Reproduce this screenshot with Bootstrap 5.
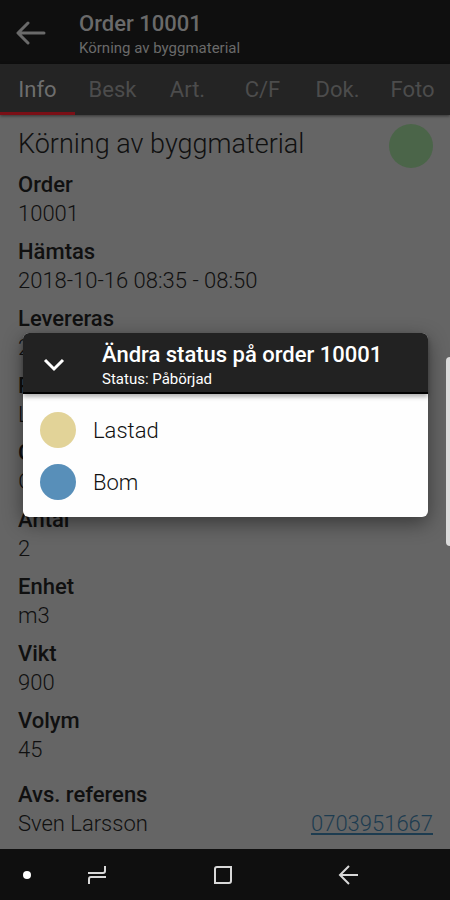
<!DOCTYPE html>
<html lang="sv">
<head>
<meta charset="utf-8">
<meta name="viewport" content="width=device-width, initial-scale=1">
<title>Order 10001</title>
<link href="https://cdn.jsdelivr.net/npm/bootstrap@5.3.0/dist/css/bootstrap.min.css" rel="stylesheet">
<style>
body { font-family: Roboto, sans-serif; background: #656565; color: #101010; font-size: 22px; line-height: 29px; font-weight: 300; }
.app-head { background: #0f0f0f; color: #6a6a6a; height: 64px; padding: 9px 16px 0; }
.app-head h1 { font-size: 22px; line-height: 30px; font-weight: 500; }
.sub-title { font-size: 15px; line-height: 18px; font-weight: 400; }
.head-back { width: 63px; color: #6a6a6a; height: 48px; }
.order-tabs { background: #242424; box-shadow: 0 1px 3px rgba(0,0,0,.5); }
.order-tabs .nav-link { color: #4c4c4c; font-size: 22px; line-height: 30px; padding: 11px 0 7px; border-bottom: 3px solid transparent; border-radius: 0; font-weight: 400; }
.order-tabs .nav-link.active { color: #6e6e6e; border-color: #7a0f16; }
.order-body { padding: 9px 17px 6px 18px; }
.order-name { font-size: 27px; line-height: 40px; font-weight: 300; }
.title-row { margin-bottom: 2px; }
.status-dot { width: 44px; height: 44px; background: #4b6549; }
.field-list dt { font-weight: 500; }
.field-list dd { margin: 0 0 9px; }
.field-list .last-field { padding-top: 7px; }
.field-list .last-field dd { margin: 0; }
.tel { color: #1d3c50; }
.status-dialog { inset: 333px 22px auto 23px; border-radius: 6px; background: #fefefe; box-shadow: 0 6px 20px rgba(0,0,0,.45); }
.dialog-head { background: #222; color: #fff; border-bottom: 2px solid #000; box-shadow: 0 3px 4px rgba(0,0,0,.3); border-radius: 6px 6px 0 0; padding: 7px 16px 4px; }
.dialog-head h2 { font-size: 22px; line-height: 30px; font-weight: 500; }
.collapse-btn { width: 63px; color: #fff; }
.option-list { padding: 10px 17px 9px; }
.option-btn { height: 52px; gap: 17px; font-size: 22px; font-weight: 300; color: #111; }
.option-dot { width: 36px; height: 36px; }
.dot-loaded { background: #e2d398; }
.dot-bom { background: #588fb9; }
.edge-handle { top: 357px; right: 0; width: 4px; height: 189px; background: #dcdcdc; border-radius: 4px 0 0 4px; }
.sys-bar { background: #0f0f0f; color: #d8d8d8; height: 51px; }
.sys-bar .btn { color: inherit; }
.sys-dot { width: 34px; }
.sys-key { width: 28%; }
</style>
<script src="https://cdn.jsdelivr.net/npm/bootstrap@5.3.0/dist/js/bootstrap.bundle.min.js"></script>
</head>
<body>
<div class="d-flex flex-column min-vh-100 position-relative">
  <header class="app-head d-flex">
    <button class="btn head-back p-0 border-0 text-start flex-shrink-0" type="button" aria-label="Tillbaka">
      <svg width="32" height="26" viewBox="0 0 32 26" fill="none" stroke="currentColor" stroke-width="3" stroke-linecap="round" stroke-linejoin="round"><path d="M28 13H3M12 3L2 13l10 10"/></svg>
    </button>
    <div>
      <h1 class="m-0">Order 10001</h1>
      <div class="sub-title">Körning av byggmaterial</div>
    </div>
  </header>
  <nav class="order-tabs nav nav-justified flex-nowrap">
    <a class="nav-link active" href="#info">Info</a>
    <a class="nav-link" href="#besk">Besk</a>
    <a class="nav-link" href="#art">Art.</a>
    <a class="nav-link" href="#cf">C/F</a>
    <a class="nav-link" href="#dok">Dok.</a>
    <a class="nav-link" href="#foto">Foto</a>
  </nav>
  <main class="order-body flex-grow-1" id="info">
    <div class="title-row d-flex justify-content-between">
      <h2 class="order-name m-0">Körning av byggmaterial</h2>
      <span class="status-dot rounded-circle flex-shrink-0"></span>
    </div>
    <dl class="field-list m-0">
      <dt>Order</dt><dd>10001</dd>
      <dt>Hämtas</dt><dd>2018-10-16 08:35 - 08:50</dd>
      <dt>Levereras</dt><dd>2018-10-16</dd>
      <dt>Plats</dt><dd>Lund</dd>
      <dt>Gods</dt><dd>Grus</dd>
      <dt>Antal</dt><dd>2</dd>
      <dt>Enhet</dt><dd>m3</dd>
      <dt>Vikt</dt><dd>900</dd>
      <dt>Volym</dt><dd>45</dd>
      <div class="last-field">
        <dt>Avs. referens</dt>
        <dd class="d-flex justify-content-between"><span>Sven Larsson</span><a class="tel" href="tel:0703951667">0703951667</a></dd>
      </div>
    </dl>
  </main>
  <footer class="sys-bar d-flex align-items-center">
    <button class="btn sys-dot p-0 border-0 text-end" type="button" aria-label="Visa fält"><svg width="14" height="10" viewBox="0 0 14 10"><circle cx="7" cy="5" r="4" fill="#fff"/></svg></button>
    <button class="btn sys-key p-0 border-0" type="button" aria-label="Senaste"><svg width="22" height="22" viewBox="0 0 22 22" fill="none" stroke="currentColor" stroke-width="2"><path d="M2 9h15q2 0 2-2V2M20 13H5q-2 0-2 2v5"/></svg></button>
    <button class="btn sys-key p-0 border-0" type="button" aria-label="Hem"><svg width="22" height="22" viewBox="0 0 22 22" fill="none" stroke="currentColor" stroke-width="2"><path d="M9 19H3V5q0-2 2-2h14v14q0 2-2 2H7"/></svg></button>
    <button class="btn sys-key p-0 border-0" type="button" aria-label="Bakåt"><svg width="22" height="22" viewBox="0 0 22 22" fill="none" stroke="currentColor" stroke-width="2"><path d="M20 11H3M11 2l-9 9 9 9"/></svg></button>
  </footer>

  <section class="status-dialog position-absolute" role="dialog" aria-labelledby="dialog-title">
    <div class="dialog-head d-flex position-relative">
      <button class="btn collapse-btn p-0 border-0 text-start flex-shrink-0" type="button" aria-label="Stäng">
        <svg width="30" height="20" viewBox="0 0 30 20" fill="none" stroke="currentColor" stroke-width="3"><path d="M6 5l9 9 9-9"/></svg>
      </button>
      <div>
        <h2 class="m-0" id="dialog-title">Ändra status på order 10001</h2>
        <div class="sub-title">Status: Påbörjad</div>
      </div>
    </div>
    <div class="option-list">
      <button class="btn option-btn d-flex align-items-center w-100 p-0 border-0" type="button"><span class="option-dot dot-loaded rounded-circle"></span>Lastad</button>
      <button class="btn option-btn d-flex align-items-center w-100 p-0 border-0" type="button"><span class="option-dot dot-bom rounded-circle"></span>Bom</button>
    </div>
  </section>
  <div class="edge-handle position-absolute"></div>
</div>
</body>
</html>
